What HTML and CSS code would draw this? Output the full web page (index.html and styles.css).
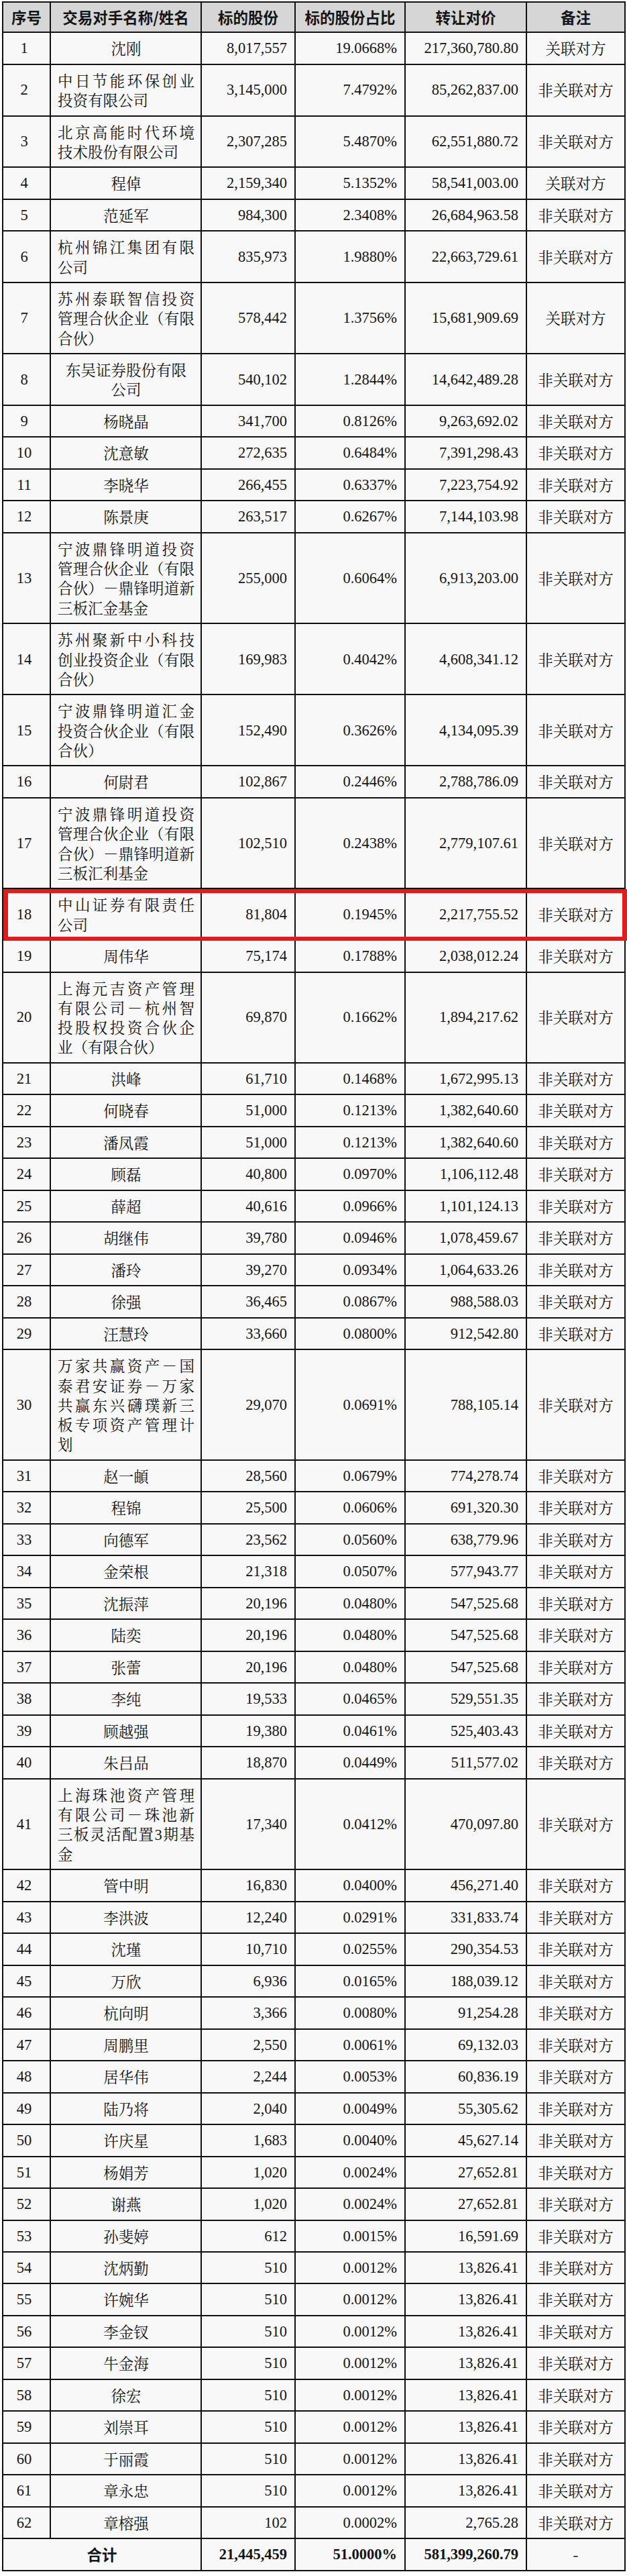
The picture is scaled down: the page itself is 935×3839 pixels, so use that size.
FILE: index.html
```html
<!DOCTYPE html>
<html lang="zh-CN">
<head>
<meta charset="utf-8">
<title>交易对手</title>
<link rel="stylesheet" href="styles.css">
</head>
<body>
<div class="tbl">
  <div class="row head"><div class="c">序号</div><div class="c">交易对手名称/姓名</div><div class="c">标的股份</div><div class="c">标的股份占比</div><div class="c">转让对价</div><div class="c">备注</div></div>
  <div class="row"><div class="c no">1</div><div class="c nm">沈刚</div><div class="c n">8,017,557</div><div class="c n">19.0668%</div><div class="c n">217,360,780.80</div><div class="c rk">关联对方</div></div>
  <div class="row"><div class="c no">2</div><div class="c nm ml"><span class="ln j">中日节能环保创业</span><span class="ln">投资有限公司</span></div><div class="c n">3,145,000</div><div class="c n">7.4792%</div><div class="c n">85,262,837.00</div><div class="c rk">非关联对方</div></div>
  <div class="row"><div class="c no">3</div><div class="c nm ml"><span class="ln j">北京高能时代环境</span><span class="ln">技术股份有限公司</span></div><div class="c n">2,307,285</div><div class="c n">5.4870%</div><div class="c n">62,551,880.72</div><div class="c rk">非关联对方</div></div>
  <div class="row"><div class="c no">4</div><div class="c nm">程倬</div><div class="c n">2,159,340</div><div class="c n">5.1352%</div><div class="c n">58,541,003.00</div><div class="c rk">关联对方</div></div>
  <div class="row"><div class="c no">5</div><div class="c nm">范延军</div><div class="c n">984,300</div><div class="c n">2.3408%</div><div class="c n">26,684,963.58</div><div class="c rk">非关联对方</div></div>
  <div class="row"><div class="c no">6</div><div class="c nm ml"><span class="ln j">杭州锦江集团有限</span><span class="ln">公司</span></div><div class="c n">835,973</div><div class="c n">1.9880%</div><div class="c n">22,663,729.61</div><div class="c rk">非关联对方</div></div>
  <div class="row"><div class="c no">7</div><div class="c nm ml"><span class="ln j">苏州泰联智信投资</span><span class="ln j">管理合伙企业（有限</span><span class="ln">合伙）</span></div><div class="c n">578,442</div><div class="c n">1.3756%</div><div class="c n">15,681,909.69</div><div class="c rk">关联对方</div></div>
  <div class="row"><div class="c no">8</div><div class="c nm"><span class="ln">东吴证券股份有限</span><span class="ln">公司</span></div><div class="c n">540,102</div><div class="c n">1.2844%</div><div class="c n">14,642,489.28</div><div class="c rk">非关联对方</div></div>
  <div class="row"><div class="c no">9</div><div class="c nm">杨晓晶</div><div class="c n">341,700</div><div class="c n">0.8126%</div><div class="c n">9,263,692.02</div><div class="c rk">非关联对方</div></div>
  <div class="row"><div class="c no">10</div><div class="c nm">沈意敏</div><div class="c n">272,635</div><div class="c n">0.6484%</div><div class="c n">7,391,298.43</div><div class="c rk">非关联对方</div></div>
  <div class="row"><div class="c no">11</div><div class="c nm">李晓华</div><div class="c n">266,455</div><div class="c n">0.6337%</div><div class="c n">7,223,754.92</div><div class="c rk">非关联对方</div></div>
  <div class="row"><div class="c no">12</div><div class="c nm">陈景庚</div><div class="c n">263,517</div><div class="c n">0.6267%</div><div class="c n">7,144,103.98</div><div class="c rk">非关联对方</div></div>
  <div class="row"><div class="c no">13</div><div class="c nm ml"><span class="ln j">宁波鼎锋明道投资</span><span class="ln j">管理合伙企业（有限</span><span class="ln j">合伙）－鼎锋明道新</span><span class="ln">三板汇金基金</span></div><div class="c n">255,000</div><div class="c n">0.6064%</div><div class="c n">6,913,203.00</div><div class="c rk">非关联对方</div></div>
  <div class="row"><div class="c no">14</div><div class="c nm ml"><span class="ln j">苏州聚新中小科技</span><span class="ln j">创业投资企业（有限</span><span class="ln">合伙）</span></div><div class="c n">169,983</div><div class="c n">0.4042%</div><div class="c n">4,608,341.12</div><div class="c rk">非关联对方</div></div>
  <div class="row"><div class="c no">15</div><div class="c nm ml"><span class="ln j">宁波鼎锋明道汇金</span><span class="ln j">投资合伙企业（有限</span><span class="ln">合伙）</span></div><div class="c n">152,490</div><div class="c n">0.3626%</div><div class="c n">4,134,095.39</div><div class="c rk">非关联对方</div></div>
  <div class="row"><div class="c no">16</div><div class="c nm">何尉君</div><div class="c n">102,867</div><div class="c n">0.2446%</div><div class="c n">2,788,786.09</div><div class="c rk">非关联对方</div></div>
  <div class="row"><div class="c no">17</div><div class="c nm ml"><span class="ln j">宁波鼎锋明道投资</span><span class="ln j">管理合伙企业（有限</span><span class="ln j">合伙）－鼎锋明道新</span><span class="ln">三板汇利基金</span></div><div class="c n">102,510</div><div class="c n">0.2438%</div><div class="c n">2,779,107.61</div><div class="c rk">非关联对方</div></div>
  <div class="row hl"><div class="c no">18</div><div class="c nm ml"><span class="ln j">中山证券有限责任</span><span class="ln">公司</span></div><div class="c n">81,804</div><div class="c n">0.1945%</div><div class="c n">2,217,755.52</div><div class="c rk">非关联对方</div></div>
  <div class="row"><div class="c no">19</div><div class="c nm">周伟华</div><div class="c n">75,174</div><div class="c n">0.1788%</div><div class="c n">2,038,012.24</div><div class="c rk">非关联对方</div></div>
  <div class="row"><div class="c no">20</div><div class="c nm ml"><span class="ln j">上海元吉资产管理</span><span class="ln j">有限公司－杭州智</span><span class="ln j">投股权投资合伙企</span><span class="ln">业（有限合伙）</span></div><div class="c n">69,870</div><div class="c n">0.1662%</div><div class="c n">1,894,217.62</div><div class="c rk">非关联对方</div></div>
  <div class="row"><div class="c no">21</div><div class="c nm">洪峰</div><div class="c n">61,710</div><div class="c n">0.1468%</div><div class="c n">1,672,995.13</div><div class="c rk">非关联对方</div></div>
  <div class="row"><div class="c no">22</div><div class="c nm">何晓春</div><div class="c n">51,000</div><div class="c n">0.1213%</div><div class="c n">1,382,640.60</div><div class="c rk">非关联对方</div></div>
  <div class="row"><div class="c no">23</div><div class="c nm">潘凤霞</div><div class="c n">51,000</div><div class="c n">0.1213%</div><div class="c n">1,382,640.60</div><div class="c rk">非关联对方</div></div>
  <div class="row"><div class="c no">24</div><div class="c nm">顾磊</div><div class="c n">40,800</div><div class="c n">0.0970%</div><div class="c n">1,106,112.48</div><div class="c rk">非关联对方</div></div>
  <div class="row"><div class="c no">25</div><div class="c nm">薛超</div><div class="c n">40,616</div><div class="c n">0.0966%</div><div class="c n">1,101,124.13</div><div class="c rk">非关联对方</div></div>
  <div class="row"><div class="c no">26</div><div class="c nm">胡继伟</div><div class="c n">39,780</div><div class="c n">0.0946%</div><div class="c n">1,078,459.67</div><div class="c rk">非关联对方</div></div>
  <div class="row"><div class="c no">27</div><div class="c nm">潘玲</div><div class="c n">39,270</div><div class="c n">0.0934%</div><div class="c n">1,064,633.26</div><div class="c rk">非关联对方</div></div>
  <div class="row"><div class="c no">28</div><div class="c nm">徐强</div><div class="c n">36,465</div><div class="c n">0.0867%</div><div class="c n">988,588.03</div><div class="c rk">非关联对方</div></div>
  <div class="row"><div class="c no">29</div><div class="c nm">汪慧玲</div><div class="c n">33,660</div><div class="c n">0.0800%</div><div class="c n">912,542.80</div><div class="c rk">非关联对方</div></div>
  <div class="row"><div class="c no">30</div><div class="c nm ml"><span class="ln j">万家共赢资产－国</span><span class="ln j">泰君安证券－万家</span><span class="ln j">共赢东兴礴璞新三</span><span class="ln j">板专项资产管理计</span><span class="ln">划</span></div><div class="c n">29,070</div><div class="c n">0.0691%</div><div class="c n">788,105.14</div><div class="c rk">非关联对方</div></div>
  <div class="row"><div class="c no">31</div><div class="c nm">赵一頔</div><div class="c n">28,560</div><div class="c n">0.0679%</div><div class="c n">774,278.74</div><div class="c rk">非关联对方</div></div>
  <div class="row"><div class="c no">32</div><div class="c nm">程锦</div><div class="c n">25,500</div><div class="c n">0.0606%</div><div class="c n">691,320.30</div><div class="c rk">非关联对方</div></div>
  <div class="row"><div class="c no">33</div><div class="c nm">向德军</div><div class="c n">23,562</div><div class="c n">0.0560%</div><div class="c n">638,779.96</div><div class="c rk">非关联对方</div></div>
  <div class="row"><div class="c no">34</div><div class="c nm">金荣根</div><div class="c n">21,318</div><div class="c n">0.0507%</div><div class="c n">577,943.77</div><div class="c rk">非关联对方</div></div>
  <div class="row"><div class="c no">35</div><div class="c nm">沈振萍</div><div class="c n">20,196</div><div class="c n">0.0480%</div><div class="c n">547,525.68</div><div class="c rk">非关联对方</div></div>
  <div class="row"><div class="c no">36</div><div class="c nm">陆奕</div><div class="c n">20,196</div><div class="c n">0.0480%</div><div class="c n">547,525.68</div><div class="c rk">非关联对方</div></div>
  <div class="row"><div class="c no">37</div><div class="c nm">张蕾</div><div class="c n">20,196</div><div class="c n">0.0480%</div><div class="c n">547,525.68</div><div class="c rk">非关联对方</div></div>
  <div class="row"><div class="c no">38</div><div class="c nm">李纯</div><div class="c n">19,533</div><div class="c n">0.0465%</div><div class="c n">529,551.35</div><div class="c rk">非关联对方</div></div>
  <div class="row"><div class="c no">39</div><div class="c nm">顾越强</div><div class="c n">19,380</div><div class="c n">0.0461%</div><div class="c n">525,403.43</div><div class="c rk">非关联对方</div></div>
  <div class="row"><div class="c no">40</div><div class="c nm">朱吕品</div><div class="c n">18,870</div><div class="c n">0.0449%</div><div class="c n">511,577.02</div><div class="c rk">非关联对方</div></div>
  <div class="row"><div class="c no">41</div><div class="c nm ml"><span class="ln j">上海珠池资产管理</span><span class="ln j">有限公司－珠池新</span><span class="ln j">三板灵活配置<span class="lat">3</span>期基</span><span class="ln">金</span></div><div class="c n">17,340</div><div class="c n">0.0412%</div><div class="c n">470,097.80</div><div class="c rk">非关联对方</div></div>
  <div class="row"><div class="c no">42</div><div class="c nm">管中明</div><div class="c n">16,830</div><div class="c n">0.0400%</div><div class="c n">456,271.40</div><div class="c rk">非关联对方</div></div>
  <div class="row"><div class="c no">43</div><div class="c nm">李洪波</div><div class="c n">12,240</div><div class="c n">0.0291%</div><div class="c n">331,833.74</div><div class="c rk">非关联对方</div></div>
  <div class="row"><div class="c no">44</div><div class="c nm">沈瑾</div><div class="c n">10,710</div><div class="c n">0.0255%</div><div class="c n">290,354.53</div><div class="c rk">非关联对方</div></div>
  <div class="row"><div class="c no">45</div><div class="c nm">万欣</div><div class="c n">6,936</div><div class="c n">0.0165%</div><div class="c n">188,039.12</div><div class="c rk">非关联对方</div></div>
  <div class="row"><div class="c no">46</div><div class="c nm">杭向明</div><div class="c n">3,366</div><div class="c n">0.0080%</div><div class="c n">91,254.28</div><div class="c rk">非关联对方</div></div>
  <div class="row"><div class="c no">47</div><div class="c nm">周鹏里</div><div class="c n">2,550</div><div class="c n">0.0061%</div><div class="c n">69,132.03</div><div class="c rk">非关联对方</div></div>
  <div class="row"><div class="c no">48</div><div class="c nm">居华伟</div><div class="c n">2,244</div><div class="c n">0.0053%</div><div class="c n">60,836.19</div><div class="c rk">非关联对方</div></div>
  <div class="row"><div class="c no">49</div><div class="c nm">陆乃将</div><div class="c n">2,040</div><div class="c n">0.0049%</div><div class="c n">55,305.62</div><div class="c rk">非关联对方</div></div>
  <div class="row"><div class="c no">50</div><div class="c nm">许庆星</div><div class="c n">1,683</div><div class="c n">0.0040%</div><div class="c n">45,627.14</div><div class="c rk">非关联对方</div></div>
  <div class="row"><div class="c no">51</div><div class="c nm">杨娟芳</div><div class="c n">1,020</div><div class="c n">0.0024%</div><div class="c n">27,652.81</div><div class="c rk">非关联对方</div></div>
  <div class="row"><div class="c no">52</div><div class="c nm">谢燕</div><div class="c n">1,020</div><div class="c n">0.0024%</div><div class="c n">27,652.81</div><div class="c rk">非关联对方</div></div>
  <div class="row"><div class="c no">53</div><div class="c nm">孙斐婷</div><div class="c n">612</div><div class="c n">0.0015%</div><div class="c n">16,591.69</div><div class="c rk">非关联对方</div></div>
  <div class="row"><div class="c no">54</div><div class="c nm">沈炳勤</div><div class="c n">510</div><div class="c n">0.0012%</div><div class="c n">13,826.41</div><div class="c rk">非关联对方</div></div>
  <div class="row"><div class="c no">55</div><div class="c nm">许婉华</div><div class="c n">510</div><div class="c n">0.0012%</div><div class="c n">13,826.41</div><div class="c rk">非关联对方</div></div>
  <div class="row"><div class="c no">56</div><div class="c nm">李金钗</div><div class="c n">510</div><div class="c n">0.0012%</div><div class="c n">13,826.41</div><div class="c rk">非关联对方</div></div>
  <div class="row"><div class="c no">57</div><div class="c nm">牛金海</div><div class="c n">510</div><div class="c n">0.0012%</div><div class="c n">13,826.41</div><div class="c rk">非关联对方</div></div>
  <div class="row"><div class="c no">58</div><div class="c nm">徐宏</div><div class="c n">510</div><div class="c n">0.0012%</div><div class="c n">13,826.41</div><div class="c rk">非关联对方</div></div>
  <div class="row"><div class="c no">59</div><div class="c nm">刘崇耳</div><div class="c n">510</div><div class="c n">0.0012%</div><div class="c n">13,826.41</div><div class="c rk">非关联对方</div></div>
  <div class="row"><div class="c no">60</div><div class="c nm">于丽霞</div><div class="c n">510</div><div class="c n">0.0012%</div><div class="c n">13,826.41</div><div class="c rk">非关联对方</div></div>
  <div class="row"><div class="c no">61</div><div class="c nm">章永忠</div><div class="c n">510</div><div class="c n">0.0012%</div><div class="c n">13,826.41</div><div class="c rk">非关联对方</div></div>
  <div class="row"><div class="c no">62</div><div class="c nm">章榕强</div><div class="c n">102</div><div class="c n">0.0002%</div><div class="c n">2,765.28</div><div class="c rk">非关联对方</div></div>
  <div class="row tot"><div class="c sum">合计</div><div class="c n">21,445,459</div><div class="c n">51.0000%</div><div class="c n">581,399,260.79</div><div class="c rk">-</div></div>
</div>
</body>
</html>
```
FILE: styles.css
```css
* {
  box-sizing: border-box;
}

body {
  margin: 0;
  background: #ffffff;
  color: #151515;
}

.tbl {
  margin: 2px 0 0 3px;
  width: 930px;
  border-top: 2px solid #111;
  border-left: 2px solid #111;
  font-family: "Liberation Serif", "Noto Serif CJK SC", "Noto Sans CJK SC", serif;
  font-size: 22.5px;
  line-height: 29.3px;
}

.row {
  display: grid;
  grid-template-columns: 71px 225px 140px 164px 181px 147px;
  border-bottom: 2px solid #111;
  background: #f8f8f8;
}

.c {
  border-right: 2px solid #111;
  padding: 8px 11px 8.2px 4px;
  display: flex;
  flex-direction: column;
  justify-content: center;
  min-width: 0;
}

.head {
  background: #d6d6d6;
}

.head .c {
  padding: 7px 2px;
  text-align: center;
  font-family: "Noto Sans CJK SC", sans-serif;
  font-weight: 700;
  white-space: nowrap;
}

.no {
  text-align: center;
  padding-left: 0;
  padding-right: 7px;
}

.nm {
  text-align: center;
  font-family: "Noto Serif CJK SC", "Noto Sans CJK SC", sans-serif;
  padding-left: 10px;
  padding-right: 9px;
}

.ml {
  text-align: left;
}

.ln {
  display: block;
}

.j {
  text-align: justify;
  text-align-last: justify;
}

.lat {
  font-family: "Liberation Serif", serif;
  line-height: 0;
}

.n {
  text-align: right;
  white-space: nowrap;
}

.rk {
  text-align: center;
  font-family: "Noto Serif CJK SC", "Noto Sans CJK SC", sans-serif;
  padding-left: 2px;
  padding-right: 2px;
  white-space: nowrap;
}

.tot .c {
  font-weight: 700;
}

.sum {
  grid-column: span 2;
  text-align: center;
  font-family: "Noto Sans CJK SC", sans-serif;
  padding-left: 0;
  padding-right: 0;
}

.hl {
  position: relative;
}

.hl::after {
  content: "";
  position: absolute;
  top: 0;
  bottom: -2px;
  left: 0;
  right: -2px;
  border-style: solid;
  border-color: #e31b1b;
  border-width: 6px 7px;
  pointer-events: none;
}
```
